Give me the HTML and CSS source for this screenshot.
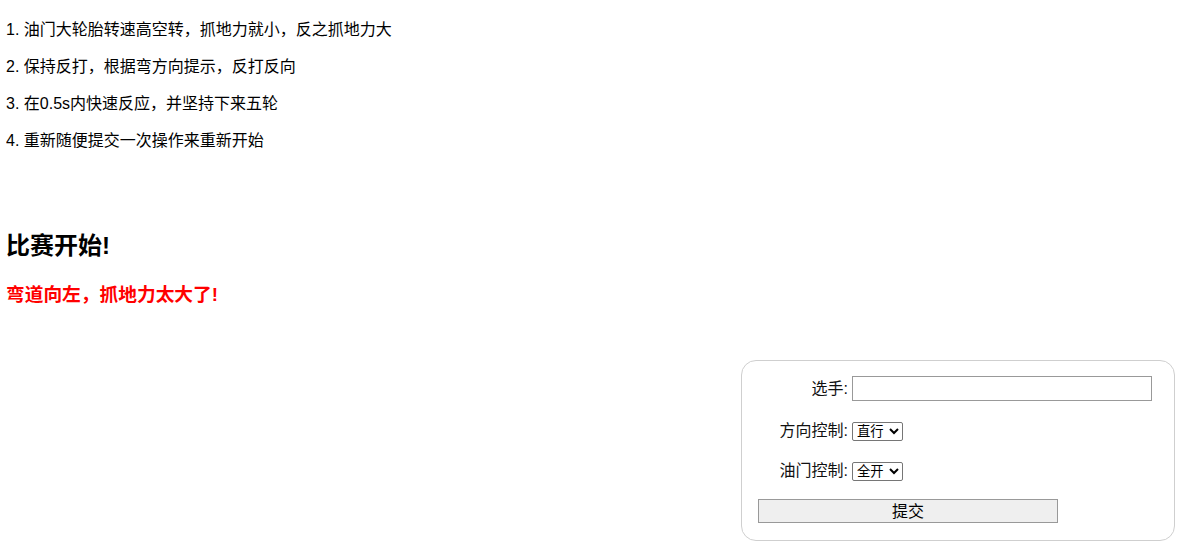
FILE: index.html
```html
<!DOCTYPE html>
<html lang="zh-CN">
<head>
<meta charset="utf-8">
<title>比赛</title>
<link rel="stylesheet" href="styles.css">
</head>
<body>
<div class="rules">
  <p>1. 油门大轮胎转速高空转，抓地力就小，反之抓地力大</p>
  <p>2. 保持反打，根据弯方向提示，反打反向</p>
  <p>3. 在0.5s内快速反应，并坚持下来五轮</p>
  <p>4. 重新随便提交一次操作来重新开始</p>
</div>
<div class="game">
  <h2 class="title">比赛开始!</h2>
  <h3 class="hint">弯道向左，抓地力太大了!</h3>
</div>
<div class="form-wrap">
  <form class="panel">
    <div class="row row-first">
      <label class="lbl" for="player">选手:</label>
      <input class="txt" id="player" type="text">
    </div>
    <div class="row">
      <label class="lbl" for="dir">方向控制:</label>
      <select class="sel" id="dir"><option>直行</option><option>左转</option><option>右转</option></select>
    </div>
    <div class="row">
      <label class="lbl" for="gas">油门控制:</label>
      <select class="sel" id="gas"><option>全开</option><option>半开</option><option>关闭</option></select>
    </div>
    <button class="submit" type="button">提交</button>
  </form>
</div>
</body>
</html>
```
FILE: styles.css
```css
html, body {
  margin: 0;
  padding: 0;
}
body {
  margin: 8px 8px 8px 6px;
  font-family: "Liberation Sans", "Noto Sans CJK SC", sans-serif;
  font-size: 16px;
  line-height: 1.32;
  color: #000;
  background: #fff;
}
.rules {
  display: flow-root;
}
.rules p {
  margin: 16px 0;
  line-height: 21px;
}
.rules p:first-child {
  margin-top: 11px;
}
.game {
  padding-top: 43px;
}
.title {
  font-size: 24px;
  font-weight: bold;
  margin: 20px 0;
  line-height: 32px;
}
.hint {
  font-size: 18.72px;
  font-weight: bold;
  color: #ff0000;
  margin: 19px 0;
  line-height: 25px;
}
.form-wrap {
  display: flex;
  justify-content: flex-end;
  padding-top: 34px;
}
.panel {
  width: 434px;
  box-sizing: border-box;
  margin-right: 7px;
  border: 1px solid #cfcfcf;
  border-radius: 15px;
  padding: 15px 16px 17px 16px;
}
.row {
  display: flex;
  align-items: center;
  min-height: 24px;
  margin-bottom: 16px;
}
.row-first {
  margin-bottom: 18px;
}
.lbl {
  width: 90px;
  text-align: right;
  margin-right: 4px;
  font-size: 16px;
  line-height: 24px;
  color: #111;
}
.txt {
  width: 300px;
  height: 25px;
  box-sizing: border-box;
  border: 1px solid #999;
  padding: 1px 2px;
  margin: 0;
  font-family: "Liberation Sans", "Noto Sans CJK SC", sans-serif;
  font-size: 13.33px;
}
.sel {
  width: 51px;
  height: 19px;
  box-sizing: border-box;
  margin: 0;
  font-family: "Liberation Sans", "Noto Sans CJK SC", sans-serif;
  font-size: 13.33px;
  line-height: 16px;
  padding: 0;
  border: 1px solid #767676;
  border-radius: 2px;
  background: #fff;
  color: #000;
}
.submit {
  display: block;
  width: 300px;
  height: 24px;
  box-sizing: border-box;
  margin: 0;
  padding: 1px 0 0 0;
  background: #efefef;
  border: 1px solid #999;
  font-family: "Liberation Sans", "Noto Sans CJK SC", sans-serif;
  font-size: 16px;
  line-height: 21px;
  color: #000;
}
```
